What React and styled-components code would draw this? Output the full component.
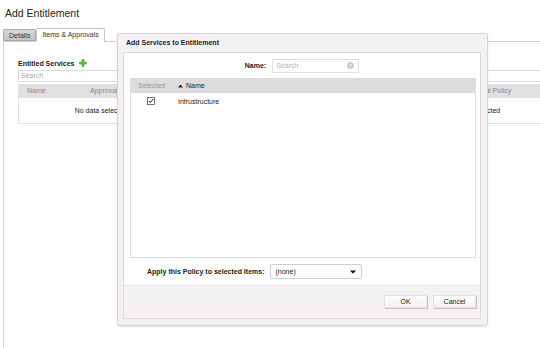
import React from 'react';
import styled, { createGlobalStyle } from 'styled-components';

const Global = createGlobalStyle`
  html, body { margin: 0; padding: 0; background: #fff; overflow: hidden; }
  body { font-family: "Liberation Sans", Arial, sans-serif; font-size: 7px; color: #333; }
  * { box-sizing: border-box; }
`;

const Page = styled.div`
  position: relative;
  width: 540px;
  height: 348px;
  overflow: hidden;
  padding-left: 3px;
`;

const Title = styled.h1`
  margin: 0;
  height: 28px;
  padding: 7px 0 0 2px;
  font-size: 10.5px;
  line-height: 12px;
  font-weight: normal;
  color: #222;
`;

const TabBar = styled.div`
  display: flex;
  align-items: flex-end;
  height: 13px;
`;

const Tab = styled.div`
  height: ${p => (p.$active ? '14px' : '12px')};
  margin-bottom: ${p => (p.$active ? '-1px' : '0')};
  padding: 0 5px;
  line-height: 12px;
  font-size: 7px;
  color: #333;
  border: 1px solid ${p => (p.$active ? '#c8c8c8' : '#a9a9a9')};
  border-bottom-color: ${p => (p.$active ? '#fff' : '#a9a9a9')};
  border-radius: 2px 2px 0 0;
  background: ${p => (p.$active ? '#fff' : 'linear-gradient(#d8d8d8, #c4c4c4)')};
  position: relative;
  z-index: 1;
`;

const Panel = styled.div`
  width: 620px;
  height: 320px;
  border-top: 1px solid #cfcfcf;
  border-left: 1px solid #d6d6d6;
  display: flex;
  gap: 20.5px;
  padding: 16px 0 0 14px;
`;

const Section = styled.div`
  width: 166px;
  flex: none;
`;

const SectionHead = styled.div`
  display: flex;
  align-items: center;
  gap: 5px;
  height: 10px;
  margin-bottom: 2px;
  font-weight: bold;
  color: #222;
`;

const SearchBox = styled.div`
  height: 12px;
  border: 1px solid #dcdcdc;
  padding-left: 2px;
  line-height: 10px;
  color: #aaa;
  margin-bottom: 2px;
`;

const GridHead = styled.div`
  display: grid;
  grid-template-columns: 67px 1fr;
  height: 14px;
  line-height: 14px;
  background: #e1dfe1;
  color: #8a8a8a;
`;

const HeadCell = styled.div`
  padding-left: ${p => p.$pad || 9}px;
  white-space: nowrap;
`;

const GridBody = styled.div`
  height: 26px;
  border: 1px solid #e2e2e2;
  border-top: none;
  display: flex;
  align-items: center;
  justify-content: center;
  color: #222;
`;

const Dialog = styled.div`
  position: absolute;
  left: 117px;
  top: 33px;
  width: 371px;
  height: 293px;
  background: #f4f1f4;
  border: 1px solid #d8d4d8;
  border-radius: 3px;
  box-shadow: 0 1px 2px rgba(0, 0, 0, 0.12);
  display: flex;
  flex-direction: column;
  padding: 0 6px 6px 5px;
  z-index: 5;
`;

const DialogTitle = styled.div`
  height: 18px;
  line-height: 18px;
  padding-left: 3px;
  font-weight: bold;
  color: #222;
`;

const ContentBox = styled.div`
  flex: 1;
  border: 1px solid #dcd8dc;
  background: #fff;
  display: flex;
  flex-direction: column;
`;

const NameRow = styled.div`
  height: 25px;
  display: flex;
  align-items: center;
  justify-content: center;
  gap: 6px;
`;

const Label = styled.span`
  font-weight: bold;
  color: #222;
  white-space: nowrap;
`;

const SearchInput = styled.div`
  width: 87px;
  height: 14px;
  border: 1px solid #e0e0e0;
  display: flex;
  align-items: center;
  justify-content: space-between;
  padding: 0 4px 0 3px;
  color: #b0b0b0;
`;

const Grid = styled.div`
  flex: 1;
  margin: 0 4px 0 6px;
  border: 1px solid #dedede;
  border-top: none;
`;

const DGridHead = styled.div`
  display: grid;
  grid-template-columns: 40px 1fr;
  height: 15px;
  line-height: 15px;
  background: #dddbdd;
`;

const DHeadCell = styled.div`
  padding-left: 7px;
  color: ${p => (p.$strong ? '#222' : '#999')};
  display: flex;
  align-items: center;
  gap: 3px;
`;

const DRow = styled.div`
  display: grid;
  grid-template-columns: 40px 1fr;
  height: 16px;
  align-items: center;
  color: #222;
`;

const CheckCell = styled.div`
  display: flex;
  justify-content: center;
`;

const TextCell = styled.div`
  padding-left: 7px;
`;

const PolicyRow = styled.div`
  height: 27px;
  display: flex;
  align-items: center;
  gap: 6px;
  padding-left: 23px;
`;

const Select = styled.div`
  width: 92px;
  height: 15px;
  border: 1px solid #cfcfcf;
  border-radius: 2px;
  display: flex;
  align-items: center;
  justify-content: space-between;
  padding: 0 5px 0 4px;
  color: #222;
`;

const Footer = styled.div`
  height: 33px;
  background: #f4f1f4;
  border-top: 1px solid #ebe7eb;
  display: flex;
  justify-content: flex-end;
  align-items: flex-start;
  gap: 6px;
  padding: 9px 4px 0 0;
`;

const Button = styled.div`
  width: 43px;
  height: 13px;
  line-height: 11px;
  text-align: center;
  color: #222;
  background: linear-gradient(#ffffff, #f1f1f1);
  border: 1px solid #e2e2e2;
  box-shadow: 1px 1px 0 #c4c4c4;
`;

const PlusIcon = () => (
  <svg width="8" height="8" viewBox="0 0 8 8">
    <path d="M3 0.5h2v2.5h2.5v2h-2.5v2.5h-2v-2.5h-2.5v-2h2.5z" fill="#5cc13c" stroke="#3a8f25" strokeWidth="0.5" />
  </svg>
);

const ClearIcon = () => (
  <svg width="7" height="7" viewBox="0 0 7 7">
    <circle cx="3.5" cy="3.5" r="3.3" fill="#c4c4c4" />
    <path d="M2.1 2.1l2.8 2.8M4.9 2.1l-2.8 2.8" stroke="#fff" strokeWidth="0.9" />
  </svg>
);

const CheckIcon = () => (
  <svg width="8" height="8" viewBox="0 0 8 8">
    <rect x="0.5" y="0.5" width="7" height="7" fill="#fff" stroke="#555" strokeWidth="0.8" />
    <path d="M1.8 4l1.5 1.6 3-3.6" fill="none" stroke="#111" strokeWidth="1" />
  </svg>
);

const SortUp = () => (
  <svg width="5" height="4" viewBox="0 0 5 4">
    <path d="M0 3.5L2.5 0.5 5 3.5z" fill="#222" />
  </svg>
);

const Caret = () => (
  <svg width="6" height="4" viewBox="0 0 6 4">
    <path d="M0 0.5h6L3 3.8z" fill="#111" />
  </svg>
);

const sections = [
  { title: 'Entitled Services', plus: true },
  { title: 'Entitled Catalog Items', plus: true },
  { title: 'Entitled Actions', plus: true },
];

export default function App() {
  return (
    <Page>
      <Global />
      <Title>Add Entitlement</Title>
      <TabBar>
        <Tab>Details</Tab>
        <Tab $active>Items &amp; Approvals</Tab>
      </TabBar>
      <Panel>
        {sections.map(s => (
          <Section key={s.title}>
            <SectionHead>
              {s.title}
              {s.plus && <PlusIcon />}
            </SectionHead>
            <SearchBox>Search</SearchBox>
            <GridHead>
              <HeadCell>Name</HeadCell>
              <HeadCell $pad={5}>Approval Policy</HeadCell>
            </GridHead>
            <GridBody>No data selected</GridBody>
          </Section>
        ))}
      </Panel>

      <Dialog>
        <DialogTitle>Add Services to Entitlement</DialogTitle>
        <ContentBox>
          <NameRow>
            <Label>Name:</Label>
            <SearchInput>
              <span>Search</span>
              <ClearIcon />
            </SearchInput>
          </NameRow>
          <Grid>
            <DGridHead>
              <DHeadCell>Selected</DHeadCell>
              <DHeadCell $strong>
                <SortUp />
                Name
              </DHeadCell>
            </DGridHead>
            <DRow>
              <CheckCell>
                <CheckIcon />
              </CheckCell>
              <TextCell>Infrustructure</TextCell>
            </DRow>
          </Grid>
          <PolicyRow>
            <Label>Apply this Policy to selected Items:</Label>
            <Select>
              <span>(none)</span>
              <Caret />
            </Select>
          </PolicyRow>
          <Footer>
            <Button>OK</Button>
            <Button>Cancel</Button>
          </Footer>
        </ContentBox>
      </Dialog>
    </Page>
  );
}
